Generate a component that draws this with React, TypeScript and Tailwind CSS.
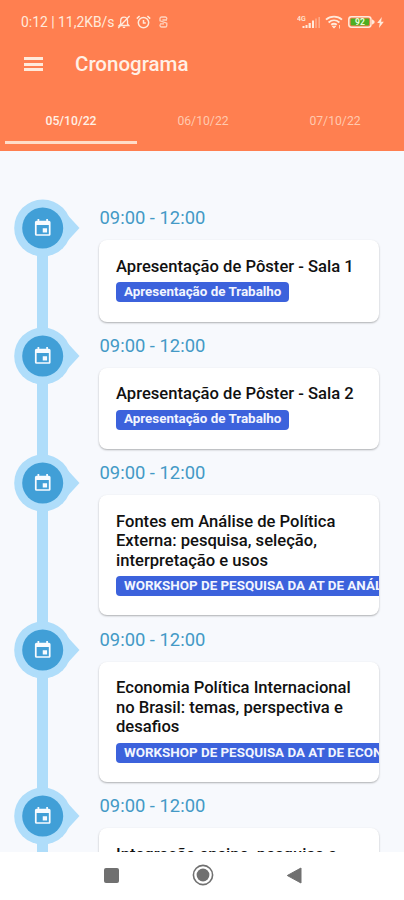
import React from "react";

type Session = { time: string; lines: string[]; tag: string };

const sessions: Session[] = [
  { time: "09:00 - 12:00", lines: ["Apresentação de Pôster - Sala 1"], tag: "Apresentação de Trabalho" },
  { time: "09:00 - 12:00", lines: ["Apresentação de Pôster - Sala 2"], tag: "Apresentação de Trabalho" },
  {
    time: "09:00 - 12:00",
    lines: ["Fontes em Análise de Política", "Externa: pesquisa, seleção,", "interpretação e usos"],
    tag: "WORKSHOP DE PESQUISA DA AT DE ANÁLISE DE POLÍTICA EXTERNA",
  },
  {
    time: "09:00 - 12:00",
    lines: ["Economia Política Internacional", "no Brasil: temas, perspectiva e", "desafios"],
    tag: "WORKSHOP DE PESQUISA DA AT DE ECONOMIA POLÍTICA",
  },
  { time: "09:00 - 12:00", lines: ["Integração ensino, pesquisa e"], tag: "" },
];

function StatusBar() {
  return (
    <div className="flex h-[44px] items-center pl-[21px] pr-[20px] text-[#ffeadb]">
      <span className="w-[96px] whitespace-nowrap pt-px text-[13.9px]">0:12 | 11,2KB/s</span>
      <svg className="h-[14px] w-[14px]" viewBox="0 0 14 14" fill="none" stroke="currentColor" strokeWidth="1.3">
        <path d="M2.2 10.5h9.6L10.5 9V5.5a3.4 3.4 0 0 0-6.8 0V9zM5.8 12.4h2.4M12.6 1 1.2 13" />
      </svg>
      <svg className="ml-[5px] h-[14px] w-[15px]" viewBox="0 0 15 14" fill="none" stroke="currentColor" strokeWidth="1.5">
        <circle cx="7.5" cy="7.6" r="5.2" />
        <path d="M7.5 5v2.9h2.3M.8 3.6 3.6 1M14.2 3.6 11.4 1" />
      </svg>
      <svg className="ml-[8px] h-[12px] w-[9px] opacity-80" viewBox="0 0 9 12" fill="none" stroke="currentColor" strokeWidth="1.3">
        <path d="M7.8 3.2V2.6A1.6 1.6 0 0 0 6.2 1H2.6A1.6 1.6 0 0 0 1 2.6v2.2l6.8 2.4v2.2A1.6 1.6 0 0 1 6.2 11H2.6A1.6 1.6 0 0 1 1 9.4v-.8M3.4 4H8M1 7.8h4" />
      </svg>
      <svg className="ml-auto h-[16px] w-[24px]" viewBox="0 0 24 16">
        <text x="0" y="7" fontSize="7" fontWeight="500" fontFamily="Roboto" fill="currentColor">4G</text>
        <path fill="currentColor" d="M5.5 12h2v2h-2zM8.5 11h2v3h-2zM11.6 9h2.2v5h-2.2zM15 6.5h2V14h-2z" />
        <path fill="currentColor" opacity=".4" d="M18.2 4.5h1.6V14h-1.6zM21.4 3H23v11h-1.6z" />
      </svg>
      <svg className="ml-[4px] h-[14px] w-[18px]" viewBox="0 0 18 14" fill="none" stroke="currentColor" strokeWidth="1.9">
        <path d="M1 4.6c4.5-4 11.5-4 16 0M3.6 7.4c3.2-2.7 7.6-2.7 10.8 0M6.2 9.8c1.8-1.4 3.8-1.4 5.6 0" />
        <path d="M7.2 11.2h3.6L9 13.2zM14.5 10v3.5" fill="currentColor" strokeWidth=".8" />
      </svg>
      <svg className="ml-[5px] h-[12px] w-[27px]" viewBox="0 0 27 12">
        <rect x=".8" y=".8" width="22.2" height="10.4" rx="2.6" fill="none" stroke="currentColor" strokeWidth="1.5" />
        <path d="M24 3.2 26.5 5v2L24 8.8z" fill="currentColor" />
        <rect x="2.6" y="2.5" width="18.6" height="7" rx="1" fill="#4dae22" />
        <text x="12" y="9" textAnchor="middle" fontSize="8.5" fontWeight="700" fontFamily="Roboto" fill="#e9ffd8">92</text>
      </svg>
      <svg className="ml-[2px] h-[11px] w-[7px]" viewBox="0 0 7 11" fill="currentColor">
        <path d="M4.8 0 .2 6h2.5L2 11l4.8-6.2H4.1z" />
      </svg>
    </div>
  );
}

function Marker() {
  return (
    <svg className="relative block h-[58px] w-[66px]" viewBox="0 0 66 58">
      <path d="M54 16.5 65.5 29 54 41.5z" fill="#afddfa" />
      <circle cx="28.7" cy="29" r="28.5" fill="#afddfa" />
      <circle cx="28.7" cy="29" r="20.5" fill="#419fd7" />
      <g transform="translate(18.3 19.2) scale(.87 .84)">
        <path
          fill="#f7fbff"
          d="M17 12h-5v5h5v-5zM16 1v2H8V1H6v2H5c-1.11 0-1.99.9-1.99 2L3 19a2 2 0 0 0 2 2h14c1.1 0 2-.9 2-2V5c0-1.1-.9-2-2-2h-1V1h-2zm3 18H5V8h14v11z"
        />
      </g>
    </svg>
  );
}

function Item({ session }: { session: Session }) {
  return (
    <div className="flex">
      <div className="ml-[14px] grid w-[85px] shrink-0">
        <div className="col-start-1 row-start-1 ml-[23px] mt-[29px] -mb-[29px] w-[11px] bg-[#afddfa]" />
        <div className="col-start-1 row-start-1">
          <Marker />
        </div>
      </div>
      <div className="w-[280px] shrink-0">
        <div className="h-[41px] whitespace-nowrap pl-[0.5px] text-[18.4px] leading-[37.5px] text-[#4499c6]">
          {session.time}
        </div>
        <div className="mb-[5.2px] overflow-hidden rounded-[8px] bg-white pb-[19.4px] pl-[17px] pt-[16.4px] shadow-[0_1px_2px_rgba(0,0,0,0.3)]">
          {session.lines.map((line) => (
            <div key={line} className="whitespace-nowrap text-[16.6px] font-medium leading-[19.6px] text-[#111]">
              {line}
            </div>
          ))}
          {session.tag && (
            <div className="mt-[5.8px] flex h-[20px] w-max items-center rounded-[4px] bg-[#3c62dc] px-[8px] text-[13.4px] font-bold text-[#f2f5ff]">
              {session.tag}
            </div>
          )}
        </div>
      </div>
    </div>
  );
}

export default function App() {
  return (
    <div className="flex h-[900px] w-[404px] flex-col overflow-hidden bg-white font-[Roboto,sans-serif]">
      <header className="h-[151px] shrink-0 bg-[#ff7f50]">
        <StatusBar />
        <div className="flex h-[40px] items-center pl-[24px]">
          <div className="flex w-[19px] flex-col gap-[2.5px]">
            <div className="h-[3px] bg-[#ffeadb]" />
            <div className="h-[3px] bg-[#ffeadb]" />
            <div className="h-[3px] bg-[#ffeadb]" />
          </div>
          <h1 className="ml-[32px] text-[20.5px] font-medium text-[#fff0e5]">Cronograma</h1>
        </div>
        <nav className="ml-[5px] mr-[3px] mt-[12px] flex h-[48px] text-center text-[12.2px] leading-[50px]">
          <div className="w-[132px] shrink-0 border-b-[3px] border-[#ffdcc8] font-medium text-[#fff0e5]">05/10/22</div>
          <div className="w-[132px] shrink-0 text-[#ffc9af]">06/10/22</div>
          <div className="w-[132px] shrink-0 text-[#ffc9af]">07/10/22</div>
        </nav>
      </header>
      <main className="h-[701px] shrink-0 overflow-hidden bg-[#f7f9fd] pt-[48.4px]">
        {sessions.map((s, i) => (
          <Item key={i} session={s} />
        ))}
      </main>
      <footer className="flex h-[48px] shrink-0 items-center bg-white pb-[2px] pl-[103.5px] text-[#707070]">
        <div className="h-[15px] w-[15px] rounded-[2px] bg-current" />
        <svg className="ml-[73px] h-[22px] w-[22px]" viewBox="0 0 22 22">
          <circle cx="11" cy="11" r="9.6" fill="none" stroke="currentColor" strokeWidth="1.6" />
          <circle cx="11" cy="11" r="6.4" fill="currentColor" />
        </svg>
        <svg className="ml-[72px] h-[17px] w-[16px]" viewBox="0 0 16 17">
          <path d="M15 1v15L1.3 8.5z" fill="currentColor" stroke="currentColor" strokeLinejoin="round" />
        </svg>
      </footer>
    </div>
  );
}
